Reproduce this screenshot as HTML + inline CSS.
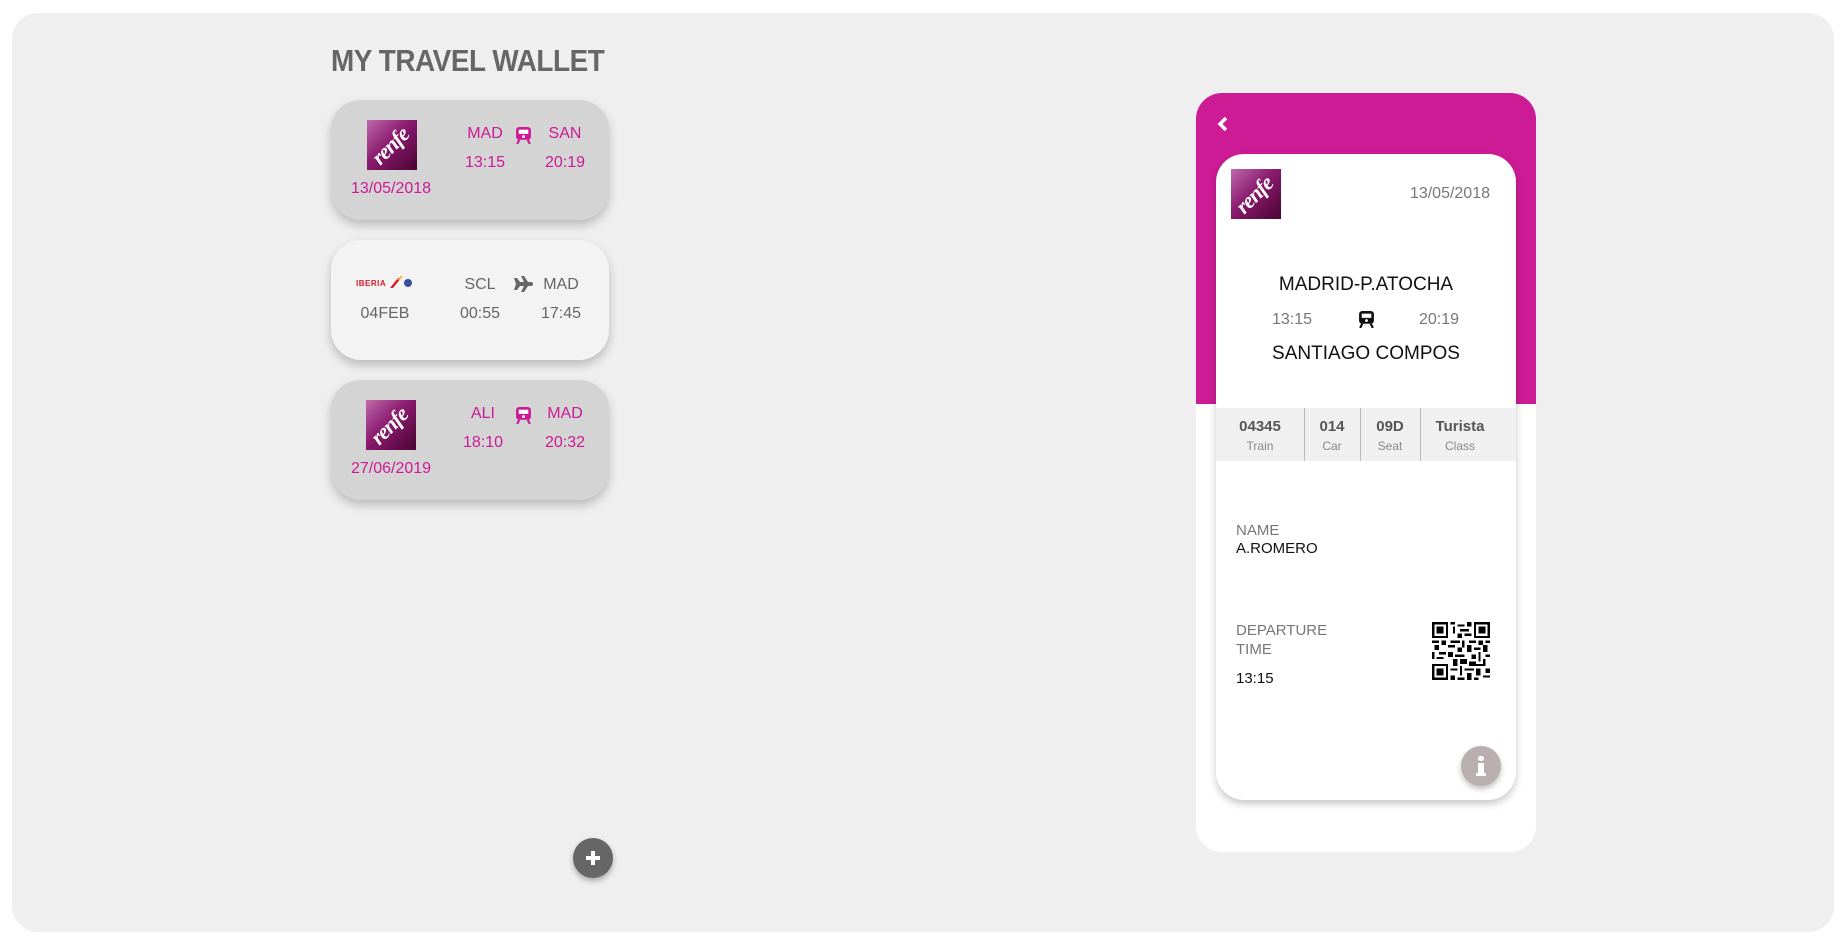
<!DOCTYPE html>
<html><head><meta charset="utf-8"><style>
*{margin:0;padding:0;box-sizing:border-box}
body{width:1848px;height:946px;background:#fff;position:relative;overflow:hidden;font-family:"Liberation Sans",sans-serif}
.abs{position:absolute}
.panel{left:12px;top:13px;width:1822px;height:919px;background:#efefef;border-radius:26px}
.title{left:331px;top:43px;font-size:31px;font-weight:bold;color:#666;letter-spacing:-0.5px;transform:scaleX(0.9);transform-origin:left top;white-space:nowrap}
.card{left:331px;width:278px;height:120px;border-radius:30px;box-shadow:0 5px 10px rgba(0,0,0,0.22)}
.g{background:#d4d4d4}.w{background:#f3f3f3}
.pk{color:#cc1a96}.gr{color:#666}
.t{position:absolute;font-size:16px;text-align:center;width:120px;white-space:nowrap}
.logo{position:absolute;width:50px;height:50px;background:linear-gradient(135deg,#c06aac 0%,#8a1a6e 45%,#4a0433 100%);overflow:hidden}
.logo span{position:absolute;left:2px;top:13px;color:#fff;font-family:"Liberation Serif",serif;font-style:italic;font-weight:bold;font-size:22px;transform:rotate(-45deg);letter-spacing:-1px}
.phone{left:1196px;top:93px;width:340px;height:759px;background:#fff;border-radius:26px;overflow:hidden}
.ptop{left:0;top:0;width:340px;height:311px;background:#cd1b96}
.inner{left:20px;top:61px;width:300px;height:646px;background:#fff;border-radius:28px;box-shadow:0 4px 8px rgba(0,0,0,0.22);overflow:hidden}
.tbl{left:0;top:254px;width:300px;height:53px;background:#f0f0f0}
.col{position:absolute;top:0;height:53px;text-align:center}
.col b{display:block;font-size:15px;color:#555;margin-top:10px}
.col i{display:block;font-style:normal;font-size:12px;color:#888;margin-top:4px}
.div{position:absolute;top:0;width:1px;height:53px;background:#bbb}
</style></head><body>
<div class="abs panel"></div>
<div class="abs title">MY TRAVEL WALLET</div>

<svg width="0" height="0" style="position:absolute"><defs>
<symbol id="train" viewBox="0 0 14 16"><rect x="0" y="0" width="14" height="12" rx="3" fill="currentColor"/><rect x="2.5" y="2.5" width="9" height="4" fill="#fff"/><circle cx="7" cy="9" r="1.3" fill="#fff"/><path d="M3 12 L1 16 M11 12 L13 16" stroke="currentColor" stroke-width="2"/></symbol>
</defs></svg>

<div class="abs card g" style="top:100px">
 <div class="logo" style="left:36px;top:20px"><span>renfe</span></div>
 <div class="t pk" style="left:0px;top:80px">13/05/2018</div>
 <div class="t pk" style="left:94px;top:25px">MAD</div>
 <svg class="abs pk" style="left:185px;top:27px" width="15" height="17"><use href="#train"/></svg>
 <div class="t pk" style="left:174px;top:25px">SAN</div>
 <div class="t pk" style="left:94px;top:54px">13:15</div>
 <div class="t pk" style="left:174px;top:54px">20:19</div>
</div>

<div class="abs card w" style="top:240px">
 <div class="abs" style="left:25px;top:39px;font-size:8px;font-weight:bold;color:#d7192d;letter-spacing:0.5px">IBERIA</div>
 <svg class="abs" style="left:57px;top:35px" width="24" height="14"><path d="M2 13 L10 3 L13 3 L5 13Z" fill="#d7192d"/><path d="M9 5 L13 1 L15 1 L11 5Z" fill="#f5b400"/><circle cx="20" cy="8" r="4" fill="#3b4fa0"/></svg>
 <div class="t gr" style="left:-6px;top:65px">04FEB</div>
 <div class="t gr" style="left:89px;top:36px">SCL</div>
 <svg class="abs" style="left:183px;top:36px" width="20" height="16" viewBox="0 0 20 16"><path d="M0 2 L3 2 L6 6 L10 6 L7 0 L10 0 L14 6 L18 6 Q20 8 18 10 L14 10 L10 16 L7 16 L10 10 L6 10 L3 14 L0 14 L2 8Z" fill="#666"/></svg>
 <div class="t gr" style="left:170px;top:36px">MAD</div>
 <div class="t gr" style="left:89px;top:65px">00:55</div>
 <div class="t gr" style="left:170px;top:65px">17:45</div>
</div>

<div class="abs card g" style="top:380px">
 <div class="logo" style="left:35px;top:20px"><span>renfe</span></div>
 <div class="t pk" style="left:0px;top:80px">27/06/2019</div>
 <div class="t pk" style="left:92px;top:25px">ALI</div>
 <svg class="abs pk" style="left:185px;top:27px" width="15" height="17"><use href="#train"/></svg>
 <div class="t pk" style="left:174px;top:25px">MAD</div>
 <div class="t pk" style="left:92px;top:54px">18:10</div>
 <div class="t pk" style="left:174px;top:54px">20:32</div>
</div>

<div class="abs" style="left:573px;top:838px;width:40px;height:40px;border-radius:50%;background:#666;box-shadow:0 3px 6px rgba(0,0,0,0.3)">
 <div class="abs" style="left:13px;top:18px;width:14px;height:4px;background:#fff"></div>
 <div class="abs" style="left:18px;top:13px;width:4px;height:14px;background:#fff"></div>
</div>

<div class="abs phone">
 <div class="abs ptop"></div>
 <svg class="abs" style="left:21px;top:24px" width="12" height="14"><path d="M9 1 L3 7 L9 13" stroke="#fff" stroke-width="3.5" fill="none"/></svg>
 <div class="abs inner">
  <div class="logo" style="left:15px;top:15px"><span>renfe</span></div>
  <div class="abs" style="left:170px;top:31px;width:104px;text-align:right;font-size:16px;color:#777">13/05/2018</div>
  <div class="abs" style="left:0;top:120px;width:300px;text-align:center;font-size:19px;color:#111">MADRID-P.ATOCHA</div>
  <div class="abs" style="left:56px;top:157px;font-size:16px;color:#777">13:15</div>
  <svg class="abs" style="left:143px;top:157px;color:#111" width="15" height="17"><use href="#train"/></svg>
  <div class="abs" style="left:203px;top:157px;font-size:16px;color:#777">20:19</div>
  <div class="abs" style="left:0;top:189px;width:300px;text-align:center;font-size:19px;color:#111">SANTIAGO COMPOS</div>
  <div class="abs tbl">
   <div class="col" style="left:0;width:88px"><b>04345</b><i>Train</i></div>
   <div class="div" style="left:88px"></div>
   <div class="col" style="left:88px;width:56px"><b>014</b><i>Car</i></div>
   <div class="div" style="left:144px"></div>
   <div class="col" style="left:144px;width:60px"><b>09D</b><i>Seat</i></div>
   <div class="div" style="left:204px"></div>
   <div class="col" style="left:204px;width:80px"><b>Turista</b><i>Class</i></div>
  </div>
  <div class="abs" style="left:20px;top:368px;font-size:15px;color:#777">NAME</div>
  <div class="abs" style="left:20px;top:386px;font-size:15px;color:#111">A.ROMERO</div>
  <div class="abs" style="left:20px;top:467px;font-size:15px;color:#777;line-height:19px">DEPARTURE<br>TIME</div>
  <div class="abs" style="left:20px;top:516px;font-size:15px;color:#111">13:15</div>
  <svg class="abs" style="left:216px;top:468px" width="58" height="58" viewBox="0 0 25 25" shape-rendering="crispEdges">
   <g fill="#000">
   <path d="M0 0h7v7h-7zM1 1v5h5v-5zM2 2h3v3h-3z" fill-rule="evenodd"/>
   <path d="M18 0h7v7h-7zM19 1v5h5v-5zM20 2h3v3h-3z" fill-rule="evenodd"/>
   <path d="M0 18h7v7h-7zM1 19v5h5v-5zM2 20h3v3h-3z" fill-rule="evenodd"/>
   <rect x="8" y="0" width="2" height="1"/><rect x="11" y="1" width="3" height="1"/><rect x="9" y="2" width="1" height="3"/><rect x="12" y="3" width="4" height="1"/><rect x="15" y="0" width="2" height="2"/><rect x="11" y="5" width="2" height="2"/><rect x="14" y="5" width="3" height="1"/>
   <rect x="0" y="8" width="3" height="1"/><rect x="4" y="8" width="2" height="2"/><rect x="8" y="8" width="4" height="1"/><rect x="13" y="8" width="1" height="3"/><rect x="16" y="8" width="3" height="1"/><rect x="20" y="8" width="2" height="2"/><rect x="23" y="8" width="2" height="1"/>
   <rect x="1" y="10" width="2" height="2"/><rect x="7" y="10" width="3" height="1"/><rect x="11" y="11" width="2" height="2"/><rect x="15" y="10" width="2" height="3"/><rect x="18" y="11" width="3" height="1"/><rect x="22" y="10" width="2" height="3"/>
   <rect x="0" y="13" width="1" height="3"/><rect x="3" y="13" width="3" height="1"/><rect x="7" y="13" width="2" height="2"/><rect x="10" y="14" width="4" height="1"/><rect x="17" y="14" width="2" height="2"/><rect x="20" y="13" width="1" height="4"/><rect x="23" y="14" width="2" height="1"/>
   <rect x="2" y="15" width="3" height="1"/><rect x="9" y="16" width="2" height="3"/><rect x="12" y="16" width="3" height="2"/><rect x="16" y="17" width="3" height="1"/><rect x="22" y="16" width="1" height="3"/>
   <rect x="8" y="20" width="3" height="1"/><rect x="12" y="19" width="1" height="4"/><rect x="14" y="20" width="4" height="1"/><rect x="16" y="18" width="6" height="1"/><rect x="19" y="20" width="2" height="3"/><rect x="23" y="20" width="2" height="2"/>
   <rect x="8" y="23" width="2" height="2"/><rect x="11" y="24" width="3" height="1"/><rect x="15" y="22" width="2" height="3"/><rect x="18" y="24" width="2" height="1"/><rect x="22" y="23" width="3" height="1"/>
   </g>
  </svg>
  <div class="abs" style="left:245px;top:592px;width:40px;height:40px;border-radius:50%;background:#b9aeb0;box-shadow:0 3px 6px rgba(0,0,0,0.25)">
   <div class="abs" style="left:17px;top:10px;width:6px;height:5px;border-radius:3px;background:#fff"></div>
   <div class="abs" style="left:17px;top:17px;width:6px;height:12px;background:#fff"></div>
   <div class="abs" style="left:15px;top:27px;width:10px;height:3px;background:#fff"></div>
  </div>
 </div>
</div>
</body></html>
